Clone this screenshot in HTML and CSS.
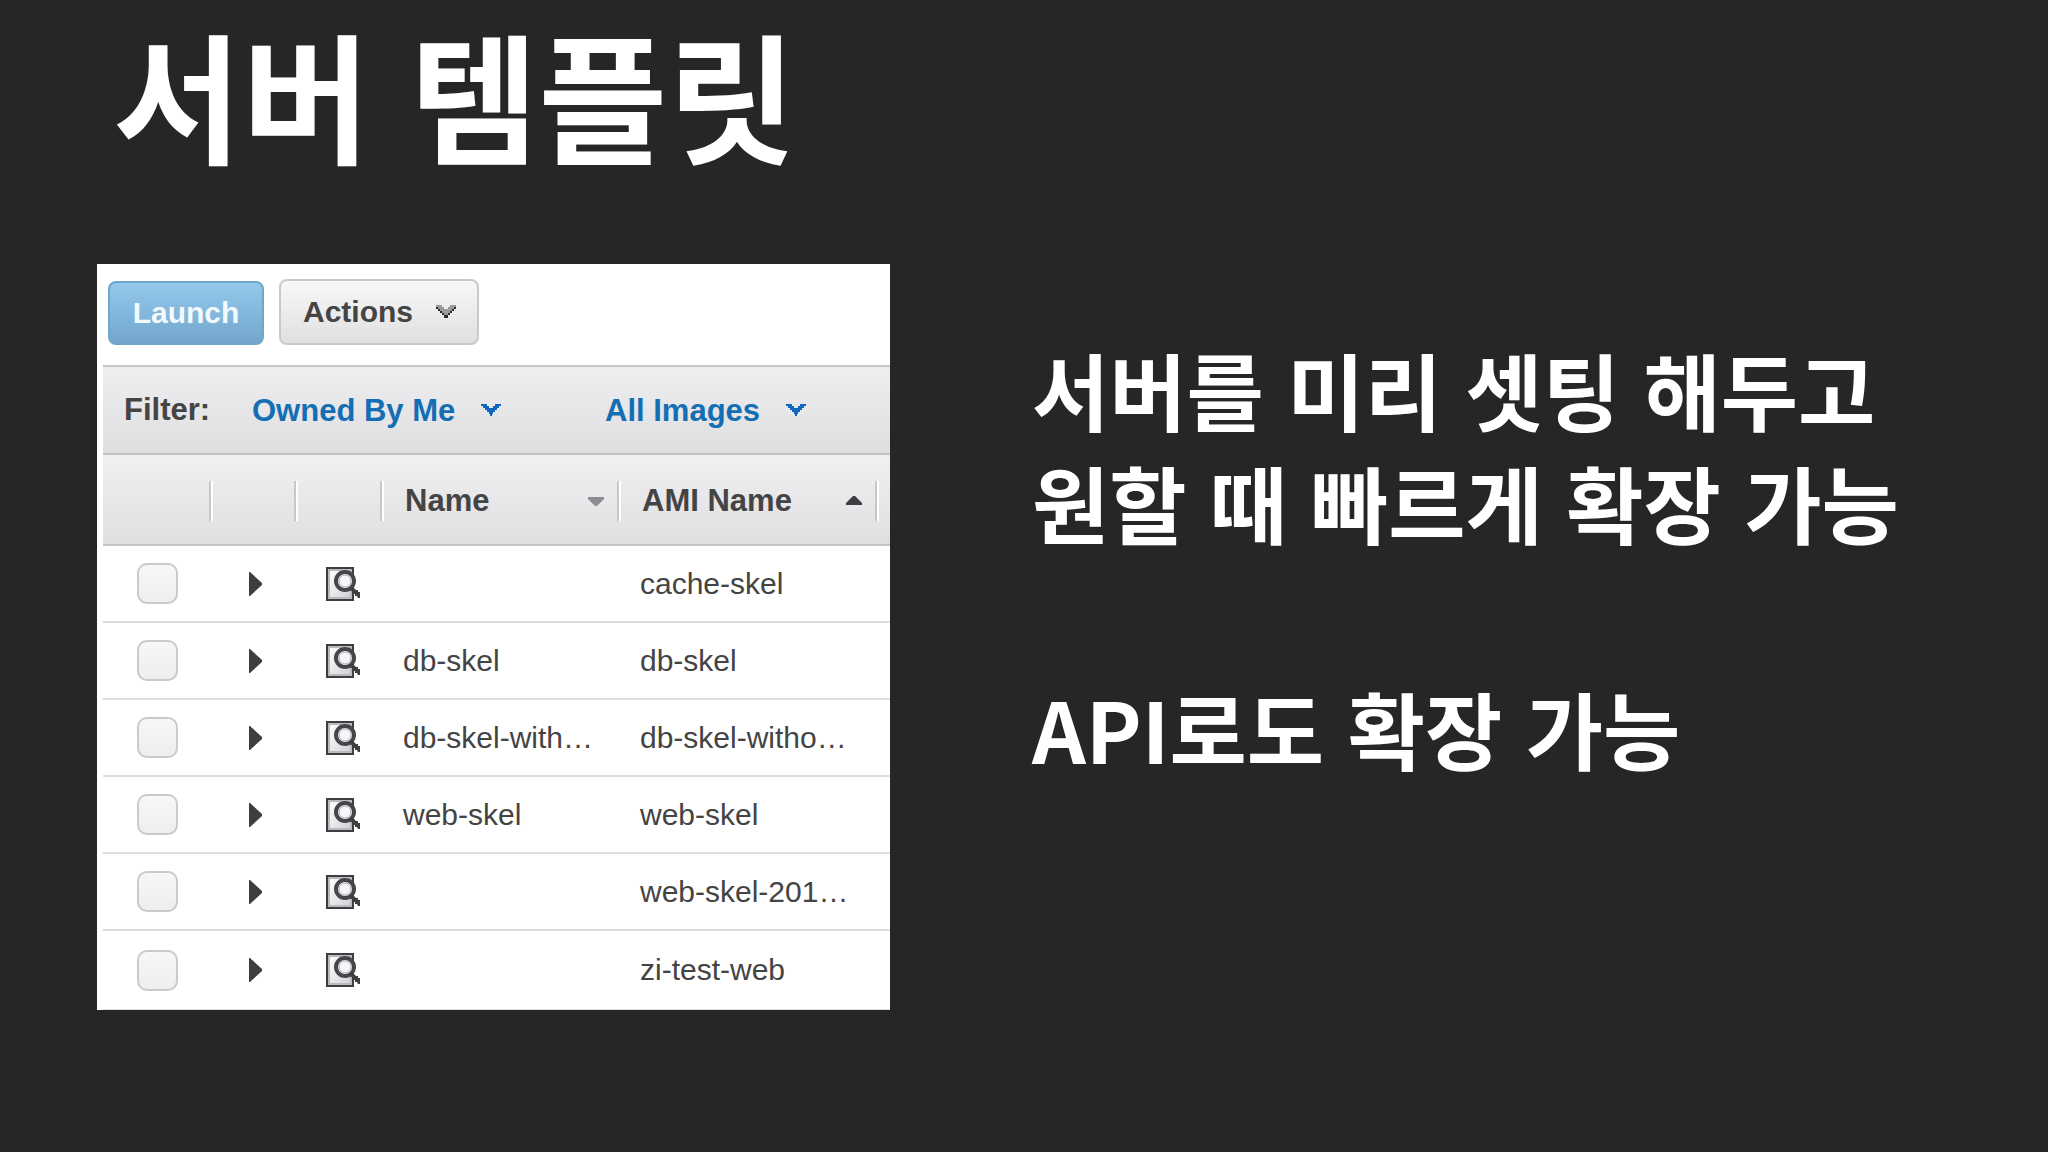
FILE: index.html
```html
<!DOCTYPE html>
<html lang="ko">
<head>
    <meta charset="UTF-8">
    <meta name="viewport" content="width=device-width, initial-scale=1">
    <title>서버 템플릿</title>
    <link rel="stylesheet" href="styles.css">
</head>
<body>
    <svg width="0" height="0" class="sprite" aria-hidden="true">
        <defs>
            <linearGradient id="pageFill" x1="0" y1="0" x2="1" y2="1">
                <stop offset="0" stop-color="#ffffff"/>
                <stop offset="1" stop-color="#d2d0d4"/>
            </linearGradient>
            <symbol id="chevron" viewBox="0 0 20 12">
                <path d="M0 0H6V2H8V4H12V2H14V0H20V2H18V4H16V6H14V8H12V10H11V12H9V10H8V8H6V6H4V4H2V2H0Z"/>
            </symbol>
            <symbol id="expand" viewBox="0 0 14 24">
                <path d="M0 0H1L13 11V13L1 24H0Z"/>
            </symbol>
            <symbol id="inspect" viewBox="0 0 36 36">
                <rect x="2" y="2" width="26" height="32" fill="#fff" stroke="#3f3d41" stroke-width="2"/>
                <rect x="4" y="4" width="22" height="28" fill="url(#pageFill)" stroke="#bbb9bd" stroke-width="2"/>
                <circle cx="20" cy="15" r="9" fill="#fff" stroke="#47454a" stroke-width="4"/>
                <circle cx="20" cy="15" r="6" fill="#f6f6f8" stroke="#aaa8ac" stroke-width="1"/>
                <path d="M25 22L28 21L31 24H33V26H35V32H33L32 30H30V28H28V26L25 24Z" fill="#3f3d41"/>
            </symbol>
        </defs>
    </svg>

    <main class="slide">
        <h1>서버 템플릿</h1>

        <div class="content">
            <section class="panel">
                <div class="toolbar">
                    <button type="button" class="btn btn-launch">Launch</button>
                    <button type="button" class="btn btn-actions">
                        Actions
                        <svg width="20" height="14" viewBox="0 0 20 14" aria-hidden="true">
                            <path d="M0 0H6V2H8V4H12V2H14V0H20V4H18V6H16V8H14V10H12V13H8V10H6V8H4V6H2V4H0Z" fill="#9a999b"/>
                            <path d="M0 2H2V4H4V6H6V8H8V10H12V8H14V6H16V4H18V2H20V4H18V6H16V8H14V10H12V13H8V10H6V8H4V6H2V4H0Z" fill="#2b2a2c"/>
                        </svg>
                    </button>
                </div>

                <div class="filter">
                    <span class="filter-label">Filter:</span>
                    <span class="dropdown dropdown-owner">
                        <select aria-label="Owner">
                            <option>Owned By Me</option>
                        </select>
                        <svg width="20" height="12" aria-hidden="true"><use href="#chevron"/></svg>
                    </span>
                    <span class="dropdown">
                        <select aria-label="Images">
                            <option>All Images</option>
                        </select>
                        <svg width="20" height="12" aria-hidden="true"><use href="#chevron"/></svg>
                    </span>
                </div>

                <table class="images">
                    <colgroup>
                        <col class="col-check">
                        <col class="col-expand">
                        <col class="col-inspect">
                        <col class="col-name">
                        <col class="col-ami">
                        <col>
                    </colgroup>
                    <thead>
                        <tr>
                            <th><div class="head"></div></th>
                            <th><div class="head"></div></th>
                            <th><div class="head"></div></th>
                            <th><div class="head">Name <svg class="sort" width="16" height="10" viewBox="0 0 16 10" aria-hidden="true"><path d="M0 1H16V3L9 10H7L0 3Z" fill="#8f8d91"/></svg></div></th>
                            <th><div class="head">AMI Name <svg class="sort" width="16" height="10" viewBox="0 0 16 10" aria-hidden="true"><path d="M0 9H16V7L9 0H7L0 7Z" fill="#3f3d41"/></svg></div></th>
                            <th></th>
                        </tr>
                    </thead>
                    <tbody>
                        <tr>
                            <td><input type="checkbox" aria-label="cache-skel"></td>
                            <td><button type="button" class="icon-btn" aria-label="Expand"><svg width="14" height="24"><use href="#expand"/></svg></button></td>
                            <td><button type="button" class="icon-btn" aria-label="Details"><svg width="36" height="36"><use href="#inspect"/></svg></button></td>
                            <td></td>
                            <td>cache-skel</td>
                            <td></td>
                        </tr>
                        <tr>
                            <td><input type="checkbox" aria-label="db-skel"></td>
                            <td><button type="button" class="icon-btn" aria-label="Expand"><svg width="14" height="24"><use href="#expand"/></svg></button></td>
                            <td><button type="button" class="icon-btn" aria-label="Details"><svg width="36" height="36"><use href="#inspect"/></svg></button></td>
                            <td>db-skel</td>
                            <td>db-skel</td>
                            <td></td>
                        </tr>
                        <tr>
                            <td><input type="checkbox" aria-label="db-skel-witho…"></td>
                            <td><button type="button" class="icon-btn" aria-label="Expand"><svg width="14" height="24"><use href="#expand"/></svg></button></td>
                            <td><button type="button" class="icon-btn" aria-label="Details"><svg width="36" height="36"><use href="#inspect"/></svg></button></td>
                            <td>db-skel-with…</td>
                            <td>db-skel-witho…</td>
                            <td></td>
                        </tr>
                        <tr>
                            <td><input type="checkbox" aria-label="web-skel"></td>
                            <td><button type="button" class="icon-btn" aria-label="Expand"><svg width="14" height="24"><use href="#expand"/></svg></button></td>
                            <td><button type="button" class="icon-btn" aria-label="Details"><svg width="36" height="36"><use href="#inspect"/></svg></button></td>
                            <td>web-skel</td>
                            <td>web-skel</td>
                            <td></td>
                        </tr>
                        <tr>
                            <td><input type="checkbox" aria-label="web-skel-201…"></td>
                            <td><button type="button" class="icon-btn" aria-label="Expand"><svg width="14" height="24"><use href="#expand"/></svg></button></td>
                            <td><button type="button" class="icon-btn" aria-label="Details"><svg width="36" height="36"><use href="#inspect"/></svg></button></td>
                            <td></td>
                            <td>web-skel-201…</td>
                            <td></td>
                        </tr>
                        <tr>
                            <td><input type="checkbox" aria-label="zi-test-web"></td>
                            <td><button type="button" class="icon-btn" aria-label="Expand"><svg width="14" height="24"><use href="#expand"/></svg></button></td>
                            <td><button type="button" class="icon-btn" aria-label="Details"><svg width="36" height="36"><use href="#inspect"/></svg></button></td>
                            <td></td>
                            <td>zi-test-web</td>
                            <td></td>
                        </tr>
                    </tbody>
                </table>
            </section>

            <section class="notes">
                <p>서버를 미리 셋팅 해두고<br>원할 때 빠르게 확장 가능</p>
                <p>API로도 확장 가능</p>
            </section>
        </div>
    </main>
</body>
</html>
```
FILE: styles.css
```css
* {
    box-sizing: border-box;
}

body {
    margin: 0;
    min-height: 100vh;
    background-color: #262527;
    color: #fff;
    font-family: "Liberation Sans", Arial, "Noto Sans CJK KR", sans-serif;
}

.sprite {
    position: absolute;
}

.slide {
    padding: 0 97px;
}

h1 {
    margin: 0;
    padding: 0 16px 80px;
    font-family: "Noto Sans CJK KR", sans-serif;
    font-size: 140px;
    line-height: 184px;
    font-weight: bold;
}

.content {
    display: grid;
    grid-template-columns: minmax(0, 793fr) minmax(0, 919fr);
    column-gap: 142px;
    align-items: start;
}

/* AMI list */
.panel {
    background-color: #fff;
    color: #444;
    padding-left: 6px;
    font-size: 31px;
}

.toolbar {
    display: flex;
    align-items: flex-end;
    gap: 15px;
    padding: 15px 5px 20px;
}

.btn {
    border-radius: 8px;
    font-family: inherit;
    font-size: 30px;
    font-weight: bold;
    cursor: pointer;
}

.btn-launch {
    width: 156px;
    height: 64px;
    padding: 0;
    border: 2px solid #6fa7cb;
    background: linear-gradient(#93c9ec, #74a6cb);
    color: #f2fafe;
}

.btn-actions {
    display: flex;
    align-items: center;
    justify-content: space-between;
    width: 200px;
    height: 66px;
    padding: 0 21px 0 22px;
    border: 2px solid #c9c8ca;
    background: linear-gradient(#f8f8f8, #e0e0e1);
    color: #444;
}

.filter {
    display: flex;
    align-items: center;
    height: 90px;
    padding-left: 21px;
    border-top: 2px solid #c6c5c8;
    border-bottom: 2px solid #c3c2c5;
    background: linear-gradient(#eeedef, #dfdee0);
    font-weight: bold;
}

.filter-label {
    width: 128px;
}

.dropdown {
    display: flex;
    align-items: center;
    color: #146eb4;
}

.dropdown-owner {
    width: 353px;
}

.dropdown select {
    appearance: none;
    margin: 0 -46px 0 0;
    padding: 0 71px 0 0;
    border: 0;
    background: none;
    color: inherit;
    font: inherit;
}

.dropdown svg {
    fill: #1167bd;
    pointer-events: none;
}

.images {
    width: 100%;
    table-layout: fixed;
    border-collapse: separate;
    border-spacing: 0;
}

.col-check {
    width: 110px;
}

.col-expand {
    width: 85px;
}

.col-inspect {
    width: 86px;
}

.col-name {
    width: 237px;
}

.col-ami {
    width: 258px;
}

thead tr {
    background: linear-gradient(#f0eff1, #dfdee0);
}

th {
    height: 91px;
    padding: 2px 0 0;
    border-bottom: 2px solid #c6c5c8;
    text-align: left;
}

/* two-tone divider at the end of each heading */
.head {
    display: flex;
    align-items: center;
    justify-content: space-between;
    height: 40px;
    padding: 0 15px 0 21px;
    border-right: 2px solid #fff;
    box-shadow: inset -2px 0 #c8c7ca;
}

td {
    height: 77px;
    padding: 0 0 0 19px;
    border-bottom: 2px solid #dddcde;
    font-size: 30px;
    white-space: nowrap;
}

tr:last-child td {
    height: 79px;
    border-bottom-width: 1px;
}

td:nth-child(1) {
    padding-left: 34px;
}

td:nth-child(2) {
    padding-left: 36px;
}

td:nth-child(3) {
    padding-left: 27px;
}

td:last-child {
    padding: 0;
}

input[type="checkbox"] {
    appearance: none;
    display: block;
    width: 41px;
    height: 41px;
    margin: 0;
    border: 2px solid #cbc9cc;
    border-radius: 10px;
    background: linear-gradient(#f8f7f8, #eeedef);
}

.icon-btn {
    display: block;
    padding: 0;
    border: 0;
    background: none;
    color: #3f3d41;
    cursor: pointer;
}

.icon-btn svg {
    display: block;
    fill: currentColor;
}

/* Right-hand text */
.notes {
    padding-top: 68px;
    font-family: "Noto Sans CJK KR", sans-serif;
    font-size: 84px;
    line-height: 113px;
    font-weight: bold;
    white-space: nowrap;
}

.notes p {
    margin: 0 0 113px;
}

.notes p:last-child {
    margin-bottom: 0;
}
```
